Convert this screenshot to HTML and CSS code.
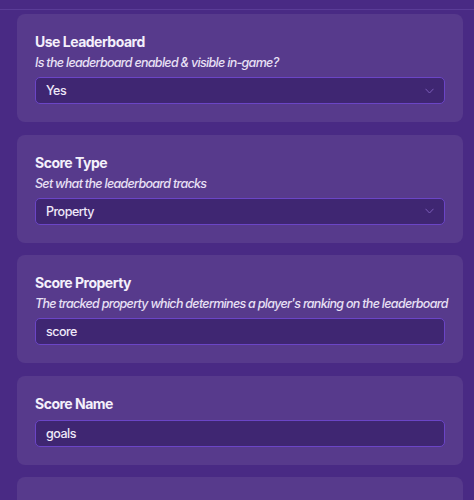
FILE: index.html
```html
<!DOCTYPE html>
<html>
<head>
<meta charset="utf-8">
<link rel="stylesheet" href="styles.css">
</head>
<body>
<div class="topbar"></div>
<div class="list">
  <section class="card">
    <div class="title">Use Leaderboard</div>
    <div class="desc">Is the leaderboard enabled &amp; visible in-game?</div>
    <div class="field select">
      <span>Yes</span>
      <svg class="chev" width="9" height="6" viewBox="0 0 9 6"><path d="M0.5 0.8 L4.5 5 L8.5 0.8" fill="none" stroke="#7b5db8" stroke-width="1"/></svg>
    </div>
  </section>
  <section class="card">
    <div class="title">Score Type</div>
    <div class="desc">Set what the leaderboard tracks</div>
    <div class="field select">
      <span>Property</span>
      <svg class="chev" width="9" height="6" viewBox="0 0 9 6"><path d="M0.5 0.8 L4.5 5 L8.5 0.8" fill="none" stroke="#7b5db8" stroke-width="1"/></svg>
    </div>
  </section>
  <section class="card">
    <div class="title">Score Property</div>
    <div class="desc">The tracked property which determines a player's ranking on the leaderboard</div>
    <div class="field"><span>score</span></div>
  </section>
  <section class="card">
    <div class="title">Score Name</div>
    <div class="field"><span>goals</span></div>
  </section>
  <section class="card"></section>
</div>
</body>
</html>
```
FILE: styles.css
```css
html, body {
  margin: 0;
  padding: 0;
  background: #492a84;
  font-family: Inter, "Noto Sans", sans-serif;
  overflow: hidden;
}
.topbar {
  height: 9px;
  border-bottom: 1px solid #5a3c96;
}
.list {
  display: flex;
  flex-direction: column;
  gap: 12.5px;
  padding: 4px 11px 0 17px;
}
.card {
  background: #573a8c;
  border-radius: 8px;
  padding: 18px;
  display: flex;
  flex-direction: column;
  min-height: 20px;
}
.title {
  font-size: 14px;
  line-height: 20px;
  font-weight: 700;
  color: #f4f0fb;
  letter-spacing: -0.5px;
}
.desc {
  margin-top: 2px;
  font-size: 12.5px;
  line-height: 18px;
  font-style: italic;
  font-weight: 500;
  color: #e8e0f5;
  letter-spacing: -0.7px;
  white-space: nowrap;
}
.field {
  margin-top: 6px;
  height: 25px;
  border: 1px solid #6b45c6;
  border-radius: 5px;
  background: #3f2672;
  display: flex;
  align-items: center;
  justify-content: space-between;
  padding: 0 10px;
  font-size: 12.5px;
  font-weight: 500;
  letter-spacing: -0.5px;
  color: #efe9f9;
}
.desc + .field {
  margin-top: 5px;
}
.chev {
  display: block;
}
```
